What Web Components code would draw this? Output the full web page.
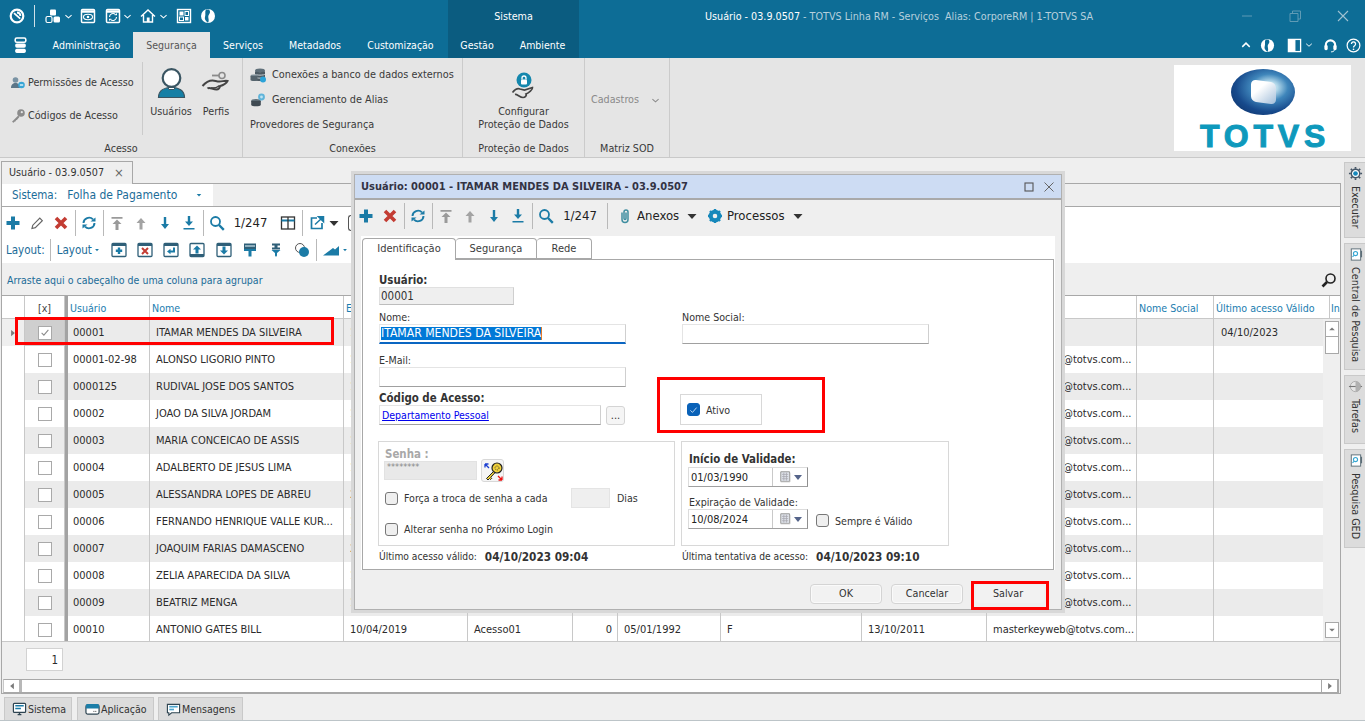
<!DOCTYPE html>
<html lang="pt-BR">
<head>
<meta charset="utf-8">
<title>Usuário - 03.9.0507</title>
<style>
html,body{margin:0;padding:0;width:1365px;height:721px;overflow:hidden;background:#efefef;}
body{font:10.7px/14px "DejaVu Sans","Liberation Sans",sans-serif;font-stretch:condensed;color:#2b2b2b;}
</style>
</head>
<body>
<script>
const T='#1b7ba6',D='#2f5f78';
const ICONS={
plus:`<path d="M6 1.5h4v4.500h4.500v4H10v4.500H6V10H1.500V6H6z" fill="${T}"/>`,
pencil:`<path d="M3 13.500l.8-3.300 7-7 2.500 2.500-7 7z" fill="#fff" stroke="#666" stroke-width="1.200"/>`,
cross:`<path d="M3 3l10 10M13 3L3 13" stroke="#c33c33" stroke-width="3.600" fill="none"/>`,
refresh:`<path d="M2.500 8a5.500 5.500 0 0 1 9.500-3.600M13.500 8A5.500 5.500 0 0 1 4 11.600" stroke="${T}" stroke-width="1.900" fill="none"/><path d="M9.500 6.500h5v-4zM6.500 9.500h-5v4z" fill="${T}"/>`,
top:`<path d="M2.500 2h11v1.700h-11zM8 4.500l4.500 4.500H9.500v6h-3V9H3.500z" fill="#9a9a9a"/>`,
up:`<path d="M8 3l4.500 5H9.500v6.500h-3V8H3.500z" fill="#a3a3a3"/>`,
down:`<path d="M8 14l4-5H9.200V2H6.800v7H4z" fill="${T}"/>`,
bottom:`<path d="M8 11l4-4.500H9.200V1H6.800v5.500H4zM2.500 13h11v1.600h-11z" fill="${T}"/>`,
search:`<circle cx="6.500" cy="6.500" r="4.500" fill="none" stroke="${T}" stroke-width="1.800"/><path d="M10 10l4.800 4.800" stroke="${T}" stroke-width="2.400"/>`,
searchd:`<circle cx="9.500" cy="6.500" r="4.500" fill="none" stroke="#222" stroke-width="1.600"/><path d="M6 10l-4.500 4.500" stroke="#222" stroke-width="2.600"/>`,
columns:`<rect x="1.500" y="2" width="13" height="12" fill="#fff" stroke="#333" stroke-width="1.300"/><path d="M1.500 5.500h13" stroke="${T}" stroke-width="2"/><path d="M8 2v12" stroke="#333" stroke-width="1.300"/>`,
export:`<path d="M8 3H2.500v10.500H13V8" fill="none" stroke="${T}" stroke-width="1.700"/><path d="M6 9.500L13 3M9.500 1.800h5v5z" stroke="${T}" stroke-width="1.500" fill="${T}"/>`,
caret:`<path d="M3.500 6h9L8 11z" fill="#333"/>`,
caretb:`<path d="M5 6.500h6L8 10z" fill="${T}"/>`,
chev:`<path d="M3.500 10l4.500-4 4.500 4" transform="rotate(180 8 8)" fill="none" stroke="currentColor" stroke-width="1.500"/>`,
chevup:`<path d="M3 10.500l5-5 5 5" fill="none" stroke="currentColor" stroke-width="1.900"/>`,
wadd:`<rect x="1" y="1.500" width="14" height="13" rx="1" fill="#fff" stroke="${D}" stroke-width="1.300"/><path d="M1 3h14" stroke="${D}" stroke-width="2"/><path d="M6.800 5.500h2.400v2h2v2.400h-2v2H6.800v-2h-2V7.500h2z" fill="${T}"/>`,
wdel:`<rect x="1" y="1.500" width="14" height="13" rx="1" fill="#fff" stroke="${D}" stroke-width="1.300"/><path d="M1 3h14" stroke="${D}" stroke-width="2"/><path d="M5 6l6 6M11 6l-6 6" stroke="#c33c33" stroke-width="2"/>`,
wret:`<rect x="1" y="1.500" width="14" height="13" rx="1" fill="#fff" stroke="${D}" stroke-width="1.300"/><path d="M1 3h14" stroke="${D}" stroke-width="2"/><path d="M11 5.500v4H7" fill="none" stroke="${T}" stroke-width="2"/><path d="M7.500 6.800v5.400L4 9.500z" fill="${T}"/>`,
wup:`<rect x="1" y="1.500" width="14" height="13" rx="1" fill="#fff" stroke="${D}" stroke-width="1.300"/><path d="M8 3.500l4 4H9.500v4h-3v-4H4z" fill="${T}"/><path d="M1 13h14" stroke="${D}" stroke-width="2"/>`,
wdown:`<rect x="1" y="1.500" width="14" height="13" rx="1" fill="#fff" stroke="${D}" stroke-width="1.300"/><path d="M8 12.500l4-4H9.500v-4h-3v4H4z" fill="${T}"/><path d="M1 3h14" stroke="${D}" stroke-width="2"/>`,
brush:`<path d="M2 1.500h12v5.500H2z" fill="${D}"/><path d="M3 4h10" stroke="#cfe3ec" stroke-width="1.200"/><path d="M2 7h12v2H9.500v5.500h-3V9H2z" fill="${T}"/>`,
pin:`<path d="M4 1.500h8v2H9.500v2H12v2H4v-2h2.500v-2H4z" fill="${D}"/><path d="M3.500 8h9L9 11v2.500L8 15l-1-1.500V11z" fill="${T}"/>`,
shapes:`<circle cx="6" cy="6" r="4.500" fill="#fff" stroke="#555" stroke-width="1"/><circle cx="10" cy="10" r="5" fill="${T}"/>`,
chart:`<path d="M0 13.500L10 6l2 1.500L16 4v9.500z" fill="${T}"/>`,
clip:`<path d="M5 5v7a3 3 0 0 0 6 0V4.500a2 2 0 0 0-4 0V11a1 1 0 0 0 2 0V5" fill="none" stroke="#3f8ea0" stroke-width="1.500" transform="translate(0 -.5)"/>`,
gear:`<circle cx="8" cy="8" r="4.300" fill="none" stroke="#1688bb" stroke-width="4"/><path d="M8 1v2.500M8 12.500V15M1 8h2.500M12.500 8H15M3 3l1.800 1.800M11.200 11.200L13 13M13 3l-1.800 1.800M4.800 11.200L3 13" stroke="#1688bb" stroke-width="2.400"/>`,
gearb:`<circle cx="8" cy="8" r="4.500" fill="#fff" stroke="#456" stroke-width="1.500"/><circle cx="8" cy="8" r="2.500" fill="#1688bb"/><path d="M8 1v2M8 13v2M1 8h2M13 8h2M3 3l1.500 1.500M11.500 11.500L13 13M13 3l-1.500 1.500M4.500 11.500L3 13" stroke="#456" stroke-width="1.800"/>`,
perm:`<circle cx="5.500" cy="5" r="2.800" fill="#7a93a4"/><path d="M1 13c0-3.500 2-5 4.500-5S10 9.500 10 13z" fill="#5c7688"/><circle cx="11.500" cy="10" r="3.300" fill="#37a5d6"/><path d="M9.800 10h3.400" stroke="#fff" stroke-width="1.200"/>`,
key:`<circle cx="11" cy="5" r="3.800" fill="#8b8b8b"/><circle cx="11.800" cy="4.200" r="1.100" fill="#e5e5e5"/><path d="M8.200 7.500L2 13.700l1.500 1 1.300-1.300 1-.1.100-1.100 1-.1 2.500-3.100z" fill="#8b8b8b"/>`,
user:`<path d="M3.500 30.500c0-7.500 6-10 13-10s13 2.500 13 10z" fill="#157fa5" stroke="#3a5562" stroke-width="1.200"/><circle cx="16.500" cy="11" r="8.800" fill="#fff" stroke="#3a5562" stroke-width="2.200"/><path d="M13 20.500h7l-1 2h-5z" fill="#fff" stroke="#3a5562"/>`,
hand:`<path d="M2.500 19c3-3.500 6-5.500 10-5.500 2.500 0 4 1 7 1s5.500-1.200 8-.5c-1.500 3.200-5.500 4.500-8 5.200 1 1.200-1 3.300-3 3.300-4 0-7-3-9-1" fill="none" stroke="#444" stroke-width="2"/><path d="M11 21c3 .3 6-.5 8-2" fill="none" stroke="#444" stroke-width="1.500"/><circle cx="22" cy="8.500" r="3" fill="none" stroke="#8b8b8b" stroke-width="1.600"/><path d="M19 8.500h-7" stroke="#8b8b8b" stroke-width="1.800"/>`,
db:`<ellipse cx="10" cy="3.500" rx="5" ry="2" fill="#60707a"/><path d="M5 4v9c0 1.300 10 1.300 10 0V4c0 1.500-10 1.500-10 0z" fill="#4c5a63"/><path d="M5 7c0 1.500 10 1.500 10 0M5 10c0 1.500 10 1.500 10 0" stroke="#c6ced3" fill="none"/><ellipse cx="4" cy="9" rx="3.500" ry="1.400" fill="#7a8a93"/><path d="M.5 9v4c0 1.400 7 1.400 7 0V9z" fill="#55646d"/><circle cx="13" cy="12.500" r="3" fill="#2ba3d8"/>`,
alias:`<ellipse cx="6" cy="9" rx="4.800" ry="1.900" fill="#5e6d76"/><path d="M1.200 9v4c0 1.800 9.600 1.800 9.600 0V9z" fill="#3f4a52"/><circle cx="11.500" cy="5" r="3.400" fill="#5fb4da"/><circle cx="11.500" cy="5" r="1.400" fill="#bfe3f2"/>`,
shield:`<circle cx="14" cy="9" r="7.500" fill="#1487ad"/><rect x="11" y="8.500" width="6" height="5" rx="1" fill="#fff"/><path d="M12 8.500V7a2 2 0 0 1 4 0v1.500" stroke="#fff" fill="none" stroke-width="1.300"/><path d="M2.500 21.500c2.500-3 5-4.500 7.500-3.500l4.500 1 8-2.500c.5 2-4 5.500-6.500 6.500 1 1.500-1 3.500-3 3.500-3 0-6-3.500-8-3" fill="none" stroke="#444" stroke-width="1.700"/>`,
cal:`<path d="M2 2h10v11H2z" fill="#dfe3ea" stroke="#8d8d8d"/><path d="M3.500 5h7M3.500 7.500h7M3.500 10h7M5.500 3v9M8.500 3v9" stroke="#a8a8b0" stroke-width=".9"/><path d="M2 13.500h10.500V3" stroke="#bbb" fill="none"/>`,
keyg:`<circle cx="14" cy="7" r="5" fill="#f0d13c" stroke="#222" stroke-width="1.200"/><circle cx="14" cy="7" r="2" fill="none" stroke="#222" stroke-width=".8" stroke-dasharray="1 1"/><path d="M10.500 10.500L3.500 17.500l1.500 1.500 1.500-1.500 1 1 1.200-1.200-1-1 4-4.300z" fill="#f0d13c" stroke="#222"/><path d="M2 2l4 4M2 2v3.500M2 2h3.500" stroke="#1b3ed1" stroke-width="1.300" fill="none" transform="translate(0 1)"/><path d="M19 19l-4-4M19 19v-3.500M19 19h-3.500" stroke="#e11" stroke-width="1.300" fill="none"/>`,
side1:`<rect x="3.500" y="2" width="10" height="12" fill="#fff" stroke="#5b6d77"/><circle cx="8" cy="7" r="2.200" fill="none" stroke="#35a6d2" stroke-width="1.200"/><path d="M6.300 9l-1.500 1.500" stroke="#35a6d2" stroke-width="1.200"/><path d="M13.500 4h1.500v7h-1.500z" fill="#5b6d77"/>`,
ball:`<circle cx="8" cy="8" r="5.500" fill="#e6e6e6" stroke="#aaa"/><path d="M1 8h14" stroke="#777" stroke-width="1.200"/><path d="M8 2.500a5.500 5.500 0 0 1 0 11" fill="#b0b0b0"/>`,
monitor:`<rect x="1.500" y="1.500" width="13" height="9.500" rx="1" fill="#fff" stroke="#2f4552" stroke-width="1.300"/><path d="M3.500 4h9M3.500 7h6" stroke="${T}" stroke-width="1.500"/><path d="M6 13.500h4M8 11v2.500" stroke="#2f4552" stroke-width="1.500"/>`,
app:`<rect x="1" y="3" width="14" height="10" rx="2" fill="#fff" stroke="#2f4552" stroke-width="1.300"/><path d="M1 3.500C1 2.700 2 2 3 2h10c1 0 2 .7 2 1.500V7H1z" fill="#1c7ea8"/><path d="M9 10h1M11 10h1" stroke="#333"/>`,
msg:`<path d="M1.500 2.500h13v9H6l-3 2.500v-2.500H1.500z" fill="#fff" stroke="#2f4552" stroke-width="1.200"/><path d="M3.500 5h9" stroke="#4da6cf" stroke-width="1.800"/><path d="M3.500 8h5" stroke="#4da6cf" stroke-width="1.800"/>`,
qring:`<circle cx="8" cy="8" r="6.300" fill="none" stroke="#fff" stroke-width="2.200"/><path d="M5 5.200l6.200 5.500M8 4.500a3.600 3.600 0 0 1 3.400 3.500" fill="none" stroke="#fff" stroke-width="1.800"/>`,
qcubes:`<rect x="5" y="1.500" width="6" height="6" rx="1" fill="#fff"/><rect x="1" y="8.500" width="6" height="6" rx="1.500" fill="none" stroke="#fff" stroke-width="1.200"/><rect x="8.500" y="8.500" width="6.500" height="6" rx="1.500" fill="#fff"/>`,
qeye:`<rect x="1.500" y="1.500" width="13" height="13" rx="1" fill="none" stroke="#fff" stroke-width="1.500"/><path d="M1.500 3.500h13" stroke="#fff" stroke-width="2.500"/><ellipse cx="8" cy="9" rx="4.500" ry="2.700" fill="none" stroke="#fff" stroke-width="1.100"/><circle cx="8" cy="9" r="1.300" fill="#fff"/>`,
qwinr:`<rect x="1.500" y="1.500" width="13" height="13" rx="1" fill="none" stroke="#fff" stroke-width="1.500"/><path d="M1.500 3.500h13" stroke="#fff" stroke-width="2.500"/><path d="M4.500 9a3.500 3.500 0 0 1 6-2.400M11.500 9a3.500 3.500 0 0 1-6 2.400" fill="none" stroke="#fff" stroke-width="1.100"/><path d="M9.500 7.200h2.500V5zM6.500 10.800H4V13z" fill="#fff"/>`,
qhome:`<path d="M1 8.500L8 2l7 6.500M3.500 7v7h9V7" fill="none" stroke="#fff" stroke-width="1.400"/><rect x="6.800" y="9.500" width="2.800" height="4.500" fill="#fff"/>`,
qgrid:`<rect x="1.500" y="1.500" width="13" height="13" fill="none" stroke="#fff" stroke-width="1.400"/><rect x="3.500" y="3.500" width="4" height="4" fill="#fff"/><rect x="9" y="3.500" width="3.500" height="4" fill="none" stroke="#fff"/><rect x="3.500" y="9" width="4" height="3.500" fill="none" stroke="#fff"/><rect x="9" y="9" width="3.500" height="3.500" fill="#fff"/>`,
globe:`<circle cx="8" cy="8" r="7" fill="#fff"/><path d="M6 1.500C4.500 4 6 6 5 9s2.500 5 3 5.800C10 12 7 9 9 6.500s.5-4 0-5z" fill="#0d6d96"/>`,
qstack:`<rect x="3" y="1" width="10" height="4" rx="1.500" fill="none" stroke="#fff" stroke-width="1.500"/><rect x="3" y="6" width="10" height="4" rx="1.500" fill="#fff"/><rect x="3" y="11" width="10" height="4" rx="1.500" fill="#fff"/>`,
panel:`<rect x="1.500" y="1.500" width="13" height="13" fill="none" stroke="#fff" stroke-width="1.400"/><rect x="2" y="2" width="6.500" height="12" fill="#fff"/><path d="M8.500 2v12" stroke="#fff"/>`,
headset:`<path d="M3 10V7.500a5 5 0 0 1 10 0V10" fill="none" stroke="#fff" stroke-width="2.200"/><rect x="1.500" y="7.500" width="3.500" height="5.500" rx="1.500" fill="#fff"/><rect x="11" y="7.500" width="3.500" height="5.500" rx="1.500" fill="#fff"/><path d="M12 13c0 1.500-2 1.800-3.500 1.800" fill="none" stroke="#fff"/>`,
help:`<circle cx="8" cy="8" r="6.800" fill="none" stroke="#fff" stroke-width="1.300"/><path d="M5.800 6.300a2.200 2.200 0 1 1 3.400 1.900C8.300 8.800 8 9.200 8 10" fill="none" stroke="#fff" stroke-width="1.400"/><circle cx="8" cy="12" r=".9" fill="#fff"/>`,
min:`<path d="M3 8h10" stroke="#5f9bb5" stroke-width="1"/>`,
restore:`<path d="M3 5.500h8v8H3zM5.500 5.500V3h8v8H11" fill="none" stroke="#5f9bb5" stroke-width="1"/>`,
close:`<path d="M3 3l10 10M13 3L3 13" fill="none" stroke="#a0c2d2" stroke-width="1.100"/>`,
dmax:`<rect x="4" y="4" width="8" height="8" fill="none" stroke="#555" stroke-width="1.100"/>`,
dclose:`<path d="M3.500 3.500l9 9M12.500 3.500l-9 9" fill="none" stroke="#666" stroke-width="1"/>`,
tri_r:`<path d="M5 3l6 5-6 5z" fill="#7a7a7a"/>`,
tri_l:`<path d="M11 3L5 8l6 5z" fill="#7a7a7a"/>`,
tri_u:`<path d="M3.500 10L8 5.500 12.500 10z" fill="#7a7a7a"/>`,
tri_d:`<path d="M3.500 6L8 10.500 12.500 6z" fill="#7a7a7a"/>`,
check:`<path d="M3.500 8.500l3 3 6-7" fill="none" stroke="#8a8a8a" stroke-width="1.400"/>`,
checkw:`<path d="M3.500 8.500l3 3 6-7" fill="none" stroke="#cfe4fa" stroke-width="1.300"/>`
};
function def(name,css,html,init){
  customElements.define(name,class extends HTMLElement{
    constructor(){super();const r=this.attachShadow({mode:'open'});r.innerHTML=`<style>${css}</style>${html}`;}
    connectedCallback(){if(init&&!this._i){this._i=1;init.call(this,this.shadowRoot);}}
  });
}
function svg(n,s,vb){return `<svg xmlns="http://www.w3.org/2000/svg" width="${s}" height="${s}" viewBox="0 0 ${vb||16} ${vb||16}">${ICONS[n]||''}</svg>`;}
def('rm-icon',`:host{display:inline-flex;align-items:center;justify-content:center;flex:none;line-height:0}svg{display:block}`,``,function(r){
  const s=this.getAttribute('size')||16;r.innerHTML+=svg(this.getAttribute('name'),s,this.getAttribute('vb'));
});
def('rm-tb',`:host{display:inline-flex;width:24px;height:24px;align-items:center;justify-content:center;flex:none}`,``,function(r){
  r.innerHTML+=svg(this.getAttribute('name'),this.getAttribute('size')||16);
});
def('rm-sep',`:host{display:block;width:1px;height:26px;background:#b9b9b9;margin:0 1px 0 2px;flex:none}`,``);
def('rm-app',`:host{display:flex;flex-direction:column;width:1365px;height:721px;position:relative;overflow:hidden;background:#efefef}
.work{display:flex;height:539px;padding-left:1px;gap:3px;box-sizing:border-box}`,
`<slot name="header"></slot><slot name="ribbon"></slot><div class="work"><slot name="main"></slot><slot name="side"></slot></div><slot name="bottom"></slot><slot></slot>`);
def('rm-header',`:host{display:block;height:58px;color:#fff;background:linear-gradient(90deg,#0d6d96 448px,#0b5c80 448px,#0b5c80 579px,#0d6d96 579px)}
.r1{display:flex;height:32px;align-items:center}
.qat{display:flex;align-items:center;width:448px;height:32px;flex:none}
.sep{width:1px;height:22px;background:#cfe0e8;margin:0 10px 0 9px}
.sys{width:131px;text-align:center;flex:none;padding-top:1px}
.ttl{margin-left:126px;white-space:pre;color:#fff;padding-top:1px}.ttl span{color:#b6d0dd}
.win{margin-left:auto;display:flex;gap:32px;padding-right:14px}
.r2{display:flex;height:26px;align-items:center}
.stack{width:40px;display:flex;justify-content:center;flex:none}
.tab{flex:none;height:26px;line-height:26px;text-align:center;font-size:10.5px}
.tab.on{background:#e5e5e5;color:#555}
.right{margin-left:auto;display:flex;align-items:center;padding-right:4px}`,
`<div class="r1"><div class="qat">
<rm-icon name="qring" size="16" style="margin-left:9px"></rm-icon><span class="sep"></span>
<rm-icon name="qcubes" size="16"></rm-icon><rm-icon name="chev" size="11" style="margin:0 5px 0 2px"></rm-icon>
<rm-icon name="qeye" size="16" style="margin-left:1px"></rm-icon>
<rm-icon name="qwinr" size="16" style="margin-left:9px"></rm-icon><rm-icon name="chev" size="11" style="margin:0 6px 0 1px"></rm-icon>
<rm-icon name="qhome" size="16" style="margin-left:1px"></rm-icon><rm-icon name="chev" size="11" style="margin:0 6px 0 2px"></rm-icon>
<rm-icon name="qgrid" size="16" style="margin-left:1px"></rm-icon>
<rm-icon name="globe" size="16" style="margin-left:8px"></rm-icon>
</div><div class="sys">Sistema</div>
<div class="ttl">Usuário - 03.9.0507<span> - TOTVS Linha RM - Serviços  Alias: CorporeRM | 1-TOTVS SA</span></div>
<div class="win"><rm-icon name="min" size="16"></rm-icon><rm-icon name="restore" size="16"></rm-icon><rm-icon name="close" size="16"></rm-icon></div></div>
<div class="r2"><div class="stack"><rm-icon name="qstack" size="17"></rm-icon></div>
<div class="tab" style="width:93px">Administração</div><div class="tab on" style="width:77px">Segurança</div><div class="tab" style="width:66px">Serviços</div><div class="tab" style="width:78px">Metadados</div><div class="tab" style="width:93px">Customização</div><div class="tab" style="width:60px">Gestão</div><div class="tab" style="width:71px">Ambiente</div>
<div class="right"><rm-icon name="chevup" size="12" style="margin-right:8px"></rm-icon><rm-icon name="globe" size="15" style="margin-right:12px"></rm-icon><rm-icon name="panel" size="15"></rm-icon><rm-icon name="chev" size="10" style="margin:0 9px 0 2px"></rm-icon><rm-icon name="headset" size="15" style="margin-right:8px"></rm-icon><rm-icon name="help" size="15"></rm-icon></div></div>`);
def('rm-ribbon',`:host{display:flex;height:100px;box-sizing:border-box;background:#e5e5e5;border-bottom:1px solid #c9c9c9;position:relative}
.logo{margin:7px 14px 0 auto;width:177px;height:86px;background:#fff;display:flex;flex-direction:column;align-items:center;box-sizing:border-box;padding-top:4px}
.globe{width:64px;height:46px;border-radius:50%;background:radial-gradient(ellipse at 60% 40%,#b8dcec 0 14%,#3f86bb 34%,#174a8c 62%,#0b2a5c 100%);position:relative;flex:none}
.globe i{position:absolute;left:20px;top:12px;width:25px;height:22px;background:linear-gradient(135deg,#ffffff 35%,#9fbcd9);border-radius:5px;transform:skewY(8deg)}
.word{font:bold 32px/30px "Liberation Sans",sans-serif;height:30px;color:#0e99bc;letter-spacing:4.800px;margin-top:6px;padding-left:5px;-webkit-text-stroke:1px #0e99bc}`,
`<slot></slot><div class="logo"><div class="globe"><i></i></div><div class="word">TOTVS</div></div>`);
def('rm-group',`:host{display:flex;flex-direction:column;height:99px;box-sizing:border-box;border-right:1px solid #cbcbcb;flex:none}
.c{height:80px;display:flex}.l{height:19px;text-align:center;line-height:17px;color:#3a3a3a;padding-top:2px;box-sizing:border-box}`,
`<div class="c"><slot></slot></div><div class="l"></div>`,function(r){r.querySelector('.l').textContent=this.getAttribute('label');});
def('rm-rb',`:host{display:flex;align-items:center;height:25px;color:#3a3a3a;white-space:nowrap}
.i{width:var(--iw,22px);display:flex;justify-content:flex-start;flex:none}`,`<span class="i"></span><slot></slot>`,function(r){
  const n=this.getAttribute('icon');const i=r.querySelector('.i');if(n)i.innerHTML=svg(n,16);else i.remove();
});
def('rm-big',`:host{display:flex;flex-direction:column;align-items:center;flex:none;color:#3a3a3a;text-align:center;line-height:13px}
.i{display:flex;height:32px;align-items:flex-end;margin-bottom:6px}`,`<span class="i"></span><slot></slot>`,function(r){
  r.querySelector('.i').innerHTML=svg(this.getAttribute('icon'),this.getAttribute('size')||32,this.getAttribute('vb')||32);
});
def('rm-doc',`:host{display:flex;flex-direction:column;width:1340px;flex:none;padding-top:2px;box-sizing:border-box}
.tab{height:23px;width:132px;box-sizing:border-box;border:1px solid #a8a8a8;border-bottom:none;display:flex;align-items:center;padding-left:7px;color:#333;background:#efefef;position:relative;top:1px}
.tab span{margin-left:10px;color:#666;font-size:13px}
.p{height:511px;box-sizing:border-box;border:1px solid #a8a8a8;background:#efefef;display:flex;flex-direction:column}
.f{height:22px;display:flex}
.fb{width:211px;background:#fff;display:flex;align-items:center;padding:0 0 1px 10px;box-sizing:border-box;color:#1b6c98;font-size:11.5px}
.fb b{font-weight:normal;margin-left:10px;width:126px;font-size:12px;white-space:nowrap}
.ln{height:1px;background:#a8a8a8;flex:none}
.tools{height:56px;background:#fff;flex:none;padding-top:2px;box-sizing:border-box}
.tr{display:flex;align-items:center;height:28px;margin:0 0 0 -1px}
.tr .n{font-size:13px;width:39px;text-align:center;color:#222;margin:0 1px 0 2px}
.lay{color:#1b6c98;font-size:11.5px}
.tr2{height:26px;margin-left:4px}
.tr2 rm-tb{width:26.200px}
.band{height:32px;flex:none;display:flex;align-items:center;justify-content:space-between;padding:1px 3px 0 5px;color:#1b6c98;box-sizing:border-box;font-size:10.5px}
.foot{height:37px;flex:none;padding:6px 0 0 24px;box-sizing:border-box}
.pg{width:37px;height:23px;background:#fff;border:1px solid #d2d2d2;box-sizing:border-box;text-align:right;padding-right:4px;line-height:22px;font-size:11.5px}
.hs{height:14px;margin:0 1px 0 1px;background:#fff;border:1px solid #a8a8a8;border-left-color:#c8c8c8;display:flex;justify-content:space-between;flex:none;box-sizing:border-box}
.hs .b{width:15px;display:flex;align-items:center;justify-content:center;background:#fff}
.hs .b.l{border-right:3px solid #b8b8b8}
.hs .b.r{border:1px solid #a8a8a8;margin:-1px 0 -1px}`,
`<div class="tab">Usuário - 03.9.0507<span>×</span></div>
<div class="p">
<div class="f"><div class="fb">Sistema:<b>Folha de Pagamento</b><rm-icon name="caretb" size="12"></rm-icon></div></div>
<div class="ln"></div>
<div class="tools">
<div class="tr"><rm-tb name="plus"></rm-tb><rm-tb name="pencil"></rm-tb><rm-tb name="cross"></rm-tb><rm-sep></rm-sep><rm-tb name="refresh"></rm-tb><rm-sep></rm-sep><rm-tb name="top"></rm-tb><rm-tb name="up"></rm-tb><rm-tb name="down"></rm-tb><rm-tb name="bottom"></rm-tb><rm-sep></rm-sep><rm-tb name="search"></rm-tb><span class="n">1/247</span><rm-tb name="columns" style="margin-left:5px"></rm-tb><rm-sep></rm-sep><rm-tb name="export" style="margin-left:1px"></rm-tb><rm-icon name="caret" size="16" style="margin-left:-3px"></rm-icon><span style="width:8px;height:16px;border:1px solid #555;border-right:none;border-radius:3px 0 0 3px;margin-left:6px;box-sizing:border-box"></span></div>
<div class="tr tr2"><span class="lay">Layout:</span><rm-sep style="margin:0 6px 0 5px;height:22px"></rm-sep><span class="lay">Layout</span><rm-icon name="caretb" size="10" style="margin:0 4px 0 0"></rm-icon><rm-tb name="wadd"></rm-tb><rm-tb name="wdel"></rm-tb><rm-tb name="wret"></rm-tb><rm-tb name="wup"></rm-tb><rm-tb name="wdown"></rm-tb><rm-tb name="brush"></rm-tb><rm-tb name="pin"></rm-tb><rm-tb name="shapes"></rm-tb><rm-sep style="height:22px;margin:0 0 0 1px"></rm-sep><rm-tb name="chart" style="margin-left:1px"></rm-tb><rm-icon name="caretb" size="10" style="margin-left:-5px"></rm-icon></div>
</div>
<div class="band"><span>Arraste aqui o cabeçalho de uma coluna para agrupar</span><rm-icon name="searchd" size="16"></rm-icon></div>
<div class="ln"></div>
<slot></slot>
<div class="foot"><div class="pg">1</div></div>
<div class="hs"><div class="b l"><rm-icon name="tri_l" size="10"></rm-icon></div><div class="b r"><rm-icon name="tri_r" size="10"></rm-icon></div></div>
</div>`);
const COLS='23px 40px 3px 82px 194px 124px 105px 45px 103px 141px 125px 150px 77px 116px 10px';
def('rm-grid',`:host{display:block;flex:none;height:345px;background:#fff;border-bottom:1px solid #c8c8c8;box-sizing:content-box;color:#2b2b2b;font-size:11px}
.h,.row{display:grid;grid-template-columns:${COLS}}
.h{height:22px;border-bottom:1px solid #c8c8c8;color:#1b7db0;line-height:24px;background:#fff;font-size:10.6px}
.h>div,.row>div{border-right:1px solid #c8c8c8;box-sizing:border-box;overflow:hidden;white-space:nowrap;padding-left:2px;min-width:0}
.h>.g,.row>.g{padding:0}
.h>.x{text-align:center;color:#444;padding:0}
.h>.bar,.row>.bar{background:#a3a3a3;border:none;padding:0}
.h>.lst{padding-left:1px;border-right:none}
.bd{display:flex;height:322px;overflow:hidden;background:#fff}
.rows{width:1321px;height:322px;overflow:hidden;flex:none}
.row{height:27px;line-height:28px;overflow:hidden}
.row:nth-child(odd){background:#ebebeb}
.row>.g{background:#fff}
.row.first>.g{background:#efefef;display:flex;align-items:center;justify-content:center}
.row>.u{padding-left:5px}.row>.n{padding-left:6px}.row>.c{padding-left:6px}
.row>.e{padding-left:6px}
.row>.em{padding-left:76px}
.row>.r{text-align:right;padding-right:5px}
.row>.cb{display:flex;align-items:center;justify-content:center;padding:0}
.row.first>.cb{background:#cfcfcf}
.box{width:14px;height:14px;border:1px solid #a9a9a9;background:#fff;box-sizing:border-box;display:flex;align-items:center;justify-content:center}
.vs{flex:1;background:#efefef;display:flex;flex-direction:column;align-items:center;padding:2px 1px;box-sizing:border-box}
.vb{width:14px;height:16px;border:1px solid #a8a8a8;background:#fff;box-sizing:border-box;display:flex;align-items:center;justify-content:center;flex:none}
.vt{width:14px;height:17px;border:1px solid #a8a8a8;border-top:none;background:#fff;box-sizing:border-box;flex:none}`,
`<div class="h"></div><div class="bd"><div class="rows"></div><div class="vs"><div class="vb">${svg('tri_u',10)}</div><div class="vt"></div><div style="flex:1"></div><div class="vb" style="margin-bottom:1px">${svg('tri_d',10)}</div></div></div>`,function(r){
  const heads=['','[x]','','Usuário','Nome','E','','','','','','','Nome Social','Último acesso Válido','In'];
  r.querySelector('.h').innerHTML=heads.map((t,i)=>`<div class="${i==0?'g':i==1?'x':i==2?'bar':i==14?'lst':''}">${t}</div>`).join('');
  const data=[['00001','ITAMAR MENDES DA SILVEIRA','1'],['00001-02-98','ALONSO LIGORIO PINTO','1'],['0000125','RUDIVAL JOSE DOS SANTOS','1'],['00002','JOAO DA SILVA JORDAM','1'],['00003','MARIA CONCEICAO DE ASSIS','1'],['00004','ADALBERTO DE JESUS LIMA','1'],['00005','ALESSANDRA LOPES DE ABREU','2'],['00006','FERNANDO HENRIQUE VALLE KUR...','1'],['00007','JOAQUIM FARIAS DAMASCENO','2'],['00008','ZELIA APARECIDA DA SILVA','1'],['00009','BEATRIZ MENGA','1'],['00010','ANTONIO GATES BILL','10/04/2019']];
  r.querySelector('.rows').innerHTML=data.map((d,i)=>{
    const last=i==11;
    return `<div class="row ${i==0?'first':''}"><div class="g">${i==0?svg('tri_r',10):''}</div><div class="cb"><span class="box">${i==0?svg('check',13):''}</span></div><div class="bar"></div><div class="u">${d[0]}</div><div class="n">${d[1]}</div><div class="c">${d[2]}</div><div class="c">${last?'Acesso01':''}</div><div class="r">${last?'0':''}</div><div class="c">${last?'05/01/1992':''}</div><div class="c">${last?'F':''}</div><div class="c">${last?'13/10/2011':''}</div><div class="e ${last?'':'em'}">${i==0?'':last?'masterkeyweb@totvs.com...':'@totvs.com...'}</div><div></div><div class="c" style="padding-left:7px">${i==0?'04/10/2023':''}</div></div>`;
  }).join('');
});
def('rm-side',`:host{display:flex;flex-direction:column;gap:5px;width:21px;flex:none;padding-top:4px}`,`<slot></slot>`);
def('rm-stab',`:host{display:flex;flex-direction:column;align-items:center;width:21px;box-sizing:border-box;background:#dcdcdc;border:1px solid #c9c9c9;border-right:none;padding-top:3px;flex:none}
.t{writing-mode:vertical-rl;white-space:nowrap;color:#333;line-height:20px;margin-top:1px}`,
`<span class="i"></span><span class="t"><slot></slot></span>`,function(r){
  r.querySelector('.i').innerHTML=svg(this.getAttribute('icon'),15);
  this.style.height=this.getAttribute('h')+'px';
});
def('rm-bottom',`:host{display:flex;height:24px;box-sizing:border-box;margin-top:3px;padding-left:4px;gap:4px;border-bottom:1px solid #bcc4c8}`,`<slot></slot>`);
def('rm-btab',`:host{display:flex;align-items:center;height:23px;box-sizing:border-box;background:#dcdcdc;border:1px solid #c9c9c9;border-bottom:none;gap:1px;padding-left:7px;flex:none;font-size:10.5px;color:#333}`,
`<span class="i" style="line-height:0"></span><slot></slot>`,function(r){r.querySelector('.i').innerHTML=svg(this.getAttribute('icon'),15);this.style.width=this.getAttribute('w')+'px';});
def('rm-dialog',`:host{position:absolute;left:354px;top:174px;width:708px;height:436px;box-sizing:border-box;background:#efefef;border:1px solid #b0b0b0;box-shadow:0 0 0 3px #d8d8d8;display:flex;flex-direction:column}
.tb{background:#cddcf3;border-bottom:2px solid #a9a9a9;display:flex;align-items:center;padding:1px 0 0 6px;box-sizing:content-box;height:22px;font-weight:bold;color:#334;flex:none;font-size:11px}
.tb span{flex:1}.tb rm-icon{margin-right:4px}
.tools{height:36px;display:flex;align-items:center;padding-bottom:4px;box-sizing:border-box;flex:none;font-size:13px;color:#222;margin-left:-1px}
.tools .n{width:40px;text-align:center;margin:0 5px 0 2px}
.body{margin:0 6px 0 6px;height:334px;background:#fff;padding:2px 0 0 1px;box-sizing:border-box;flex:none}
.foot{display:flex;padding:14px 0 0 455px;gap:9px;align-items:flex-start}`,
`<div class="tb"><span>Usuário: 00001 - ITAMAR MENDES DA SILVEIRA - 03.9.0507</span><rm-icon name="dmax" size="16"></rm-icon><rm-icon name="dclose" size="16"></rm-icon></div>
<div class="tools"><rm-tb name="plus"></rm-tb><rm-tb name="cross"></rm-tb><rm-sep></rm-sep><rm-tb name="refresh"></rm-tb><rm-sep></rm-sep><rm-tb name="top"></rm-tb><rm-tb name="up"></rm-tb><rm-tb name="down"></rm-tb><rm-tb name="bottom"></rm-tb><rm-sep></rm-sep><rm-tb name="search"></rm-tb><span class="n">1/247</span><rm-sep></rm-sep><rm-tb name="clip" style="margin-left:4px"></rm-tb><span style="width:46px">Anexos</span><rm-icon name="caret" size="16" style="margin:0 7px 0 1px"></rm-icon><rm-icon name="gear" size="16" style="margin-right:4px"></rm-icon><span style="width:63px">Processos</span><rm-icon name="caret" size="16"></rm-icon></div>
<div class="body"><slot></slot></div>
<div class="foot"><slot name="actions"></slot></div>`);
def('rm-tabs',`:host{display:block}
.s{display:flex;height:21px;align-items:flex-end;position:relative;z-index:1}
.t{height:21px;box-sizing:border-box;border:1px solid #a8a8a8;border-left:none;border-radius:4px 4px 0 0;text-align:center;line-height:20px;font-size:11px;color:#3c3c3c;background:#fff}
.t.on{border-left:1px solid #a8a8a8;border-bottom:none;height:22px;margin-bottom:-1px}
.p{height:311px;box-sizing:border-box;border:1px solid #a8a8a8;width:692px;padding:13px 0 0 16px}`,
`<div class="s"><div class="t on" style="width:94px">Identificação</div><div class="t" style="width:81px">Segurança</div><div class="t" style="width:55px">Rede</div></div><div class="p"><slot></slot></div>`);
def('rm-field',`:host{display:block;color:#333;font-size:10.6px}
.l{height:14px;line-height:14px;white-space:nowrap}
:host([bold]) .l{font-weight:bold;font-size:11.4px;color:#333}
.b{box-sizing:border-box;background:#fff;border:1px solid #e4e4e4;border-bottom:1px solid #a0a0a0;border-right-color:#cfcfcf;display:flex;align-items:center;padding-left:1px;white-space:nowrap;overflow:hidden;font-size:11.5px}
:host([ro]) .b{background:#efefef;border-color:#e0e0e0;border-bottom-color:#bdbdbd;border-right-color:#cfcfcf}
:host([focus]) .b{border-bottom:2px solid #0a66c2;border-left-color:#e9e9e9}`,
`<div class="l"></div><div class="b"><slot></slot></div>`,function(r){
  r.querySelector('.l').textContent=this.getAttribute('label');
  const b=r.querySelector('.b');b.style.width=this.getAttribute('w')+'px';b.style.height=this.getAttribute('h')+'px';
});
def('rm-check',`:host{display:flex;align-items:center;gap:6px;color:#333;font-size:10.6px;white-space:nowrap}
.c{width:13px;height:13px;border:1px solid #777;border-radius:3px;background:#efefef;box-sizing:border-box;display:flex;align-items:center;justify-content:center;flex:none}
:host([checked]) .c{background:#0a62b8;border-color:#0a62b8}`,
`<span class="c"></span><slot></slot>`,function(r){if(this.hasAttribute('checked'))r.querySelector('.c').innerHTML=svg('checkw',12);});
def('rm-date',`:host{display:flex;width:120px;height:20px;box-sizing:border-box;border:1px solid #dcdcdc;border-bottom-color:#a0a0a0;border-right-color:#8f8f8f;background:#fff;font-size:11px;color:#222}
.v{width:84px;border-right:1px solid #c9c9c9;padding-left:2px;line-height:19px;box-sizing:border-box}
.b{flex:1;display:flex;align-items:center;justify-content:center;line-height:0;gap:1px}.tr{width:0;height:0;border:4px solid transparent;border-top:5px solid #55648a;border-bottom:none}`,
`<div class="v"><slot></slot></div><div class="b">${svg('cal',14)}<span class="tr"></span></div>`);
def('rm-btn',`:host{display:flex;width:72px;height:20px;box-sizing:border-box;border:1px solid #d4d4d4;border-radius:4px;background:#f2f2f2;align-items:center;justify-content:center;color:#333;font-size:10.7px;flex:none;box-shadow:inset 0 0 0 1px #fafafa}`,`<slot></slot>`);
def('rm-mark',`:host{position:absolute;box-sizing:border-box;border:3px solid #f00;display:block;pointer-events:none;z-index:5}`,``);
def('rm-form',`:host{display:block;color:#333}
.top{display:grid;grid-template-columns:303px 1fr}
.groups{display:flex;margin:16px 0 0 -1px;gap:6px}
.g{box-sizing:border-box;border:1px solid #d8d8d8;height:105px;flex:none}
.g1{width:297px;padding:5px 0 0 6px}.g2{width:268px;padding:10px 0 0 7px}
.ttl{height:14px;line-height:15px;font-weight:bold;font-size:11.4px}
.gr{color:#a8a8a8}
.row{display:flex;align-items:center}
.ip{width:93px;height:19px;background:#e9e9e9;border:1px solid #e2e2e2;box-sizing:border-box;color:#888;font-size:9px;line-height:11px;padding-left:2px;margin-left:-1px}
.key{width:23px;height:23px;border:1px solid #d8d8d8;border-radius:3px;background:#f5f5f5;margin-left:4px;box-sizing:border-box;display:flex;align-items:center;justify-content:center}
.days{width:39px;height:20px;background:#efefef;border:1px solid #e4e4e4;box-sizing:border-box;margin:0 7px 0 0}
.sm{font-size:10.6px;height:14px;line-height:15px}
.bot{display:flex;margin-top:4px;height:14px;line-height:14px;font-size:10.2px;align-items:center}
.bot b{font-size:11.7px;margin-left:8px}
.bot div{display:flex;align-items:center;white-space:nowrap}`,
`<div class="top"><div><slot name="left"></slot></div><div><slot name="right"></slot></div></div>
<div class="groups">
<div class="g g1"><div class="ttl gr" style="margin-bottom:-2px">Senha :</div>
<div class="row"><div class="ip">********</div><div class="key">${svg('keyg',20,20)}</div></div>
<div class="row" style="margin-top:6px"><rm-check style="width:186px">Força a troca de senha a cada</rm-check><span class="days"></span><span class="sm">Dias</span></div>
<div class="row" style="margin-top:14px"><rm-check>Alterar senha no Próximo Login</rm-check></div></div>
<div class="g g2"><div class="ttl">Início de Validade:</div><rm-date style="margin:1px 0 0 -1px">01/03/1990</rm-date>
<div class="sm" style="margin-top:8px">Expiração de Validade:</div>
<div class="row" style="margin-left:-1px"><rm-date>10/08/2024</rm-date><rm-check style="margin:3px 0 0 8px">Sempre é Válido</rm-check></div></div>
</div>
<div class="bot"><div style="width:303px">Último acesso válido:<b>04/10/2023 09:04</b></div><div>Última tentativa de acesso:<b>04/10/2023 09:10</b></div></div>`);
</script>
<rm-app>
<rm-header slot="header"></rm-header>
<rm-ribbon slot="ribbon">
  <rm-group label="Acesso" style="width:243px"><div style="display:flex;width:100%">
    <div style="width:143px;height:73px;border-right:1px solid #cbcbcb;margin-top:4px;padding:8px 0 0 10px;box-sizing:border-box;flex:none;--iw:18px">
      <rm-rb icon="perm" style="height:26px;margin-bottom:7px">Permissões de Acesso</rm-rb>
      <rm-rb icon="key" style="height:26px">Códigos de Acesso</rm-rb>
    </div>
    <div style="display:flex;padding-top:9px">
      <rm-big icon="user" style="width:50px;margin-left:3px">Usuários</rm-big>
      <rm-big icon="hand" style="width:40px">Perfis</rm-big>
    </div></div>
  </rm-group>
  <rm-group label="Conexões" style="width:220px"><div style="padding:4px 0 0 7px;font-size:10.8px">
    <rm-rb icon="db">Conexões a banco de dados externos</rm-rb>
    <rm-rb icon="alias">Gerenciamento de Alias</rm-rb>
    <rm-rb>Provedores de Segurança</rm-rb></div>
  </rm-group>
  <rm-group label="Proteção de Dados" style="width:122px"><rm-big icon="shield" size="28" vb="28" style="width:121px;padding-top:9px">Configurar<br>Proteção de Dados</rm-big></rm-group>
  <rm-group label="Matriz SOD" style="width:85px"><div style="display:flex;align-items:center;height:80px;padding-left:6px;color:#8a8a8a;margin-top:2px">Cadastros<rm-icon name="chev" size="11" style="margin-left:11px"></rm-icon></div></rm-group>
</rm-ribbon>
<rm-doc slot="main"><rm-grid></rm-grid></rm-doc>
<rm-side slot="side">
  <rm-stab icon="gearb" h="76">Executar</rm-stab>
  <rm-stab icon="side1" h="127">Central de Pesquisa</rm-stab>
  <rm-stab icon="ball" h="69">Tarefas</rm-stab>
  <rm-stab icon="side1" h="99">Pesquisa GED</rm-stab>
</rm-side>
<rm-bottom slot="bottom">
  <rm-btab icon="monitor" w="68">Sistema</rm-btab>
  <rm-btab icon="app" w="77" style="margin-left:1px">Aplicação</rm-btab>
  <rm-btab icon="msg" w="85">Mensagens</rm-btab>
</rm-bottom>
<rm-dialog>
  <rm-tabs><rm-form>
    <div slot="left">
      <rm-field bold label="Usuário:" ro w="135" h="18" style="margin-bottom:5px">00001</rm-field>
      <rm-field focus label="Nome:" w="247" h="20" style="margin-bottom:9px"><span style="background:#0078d7;color:#fff;line-height:13px;border-right:1px solid #e07a2b;font-size:12.1px">ITAMAR MENDES DA SILVEIRA</span></rm-field>
      <rm-field label="E-Mail:" w="247" h="20" style="margin-bottom:4px"></rm-field>
      <div style="display:flex;align-items:flex-end;gap:5px"><rm-field bold label="Código de Acesso:" w="222" h="20"><a href="#" style="color:#0000ee;font-size:10.5px;padding-left:1px">Departamento Pessoal</a></rm-field><span style="width:19px;height:19px;border:1px solid #d4d4d4;border-radius:3px;background:#f5f5f5;box-sizing:border-box;text-align:center;line-height:17px;font-size:11px">...</span></div>
    </div>
    <div slot="right">
      <rm-field label="Nome Social:" w="247" h="20" style="margin-top:37px"></rm-field>
      <div style="margin:50px 0 0 -2px;width:82px;height:31px;border:1px solid #d8d8d8;box-sizing:border-box;display:flex;align-items:center;padding-left:6px"><rm-check checked>Ativo</rm-check></div>
    </div>
  </rm-form></rm-tabs>
  <rm-btn slot="actions">OK</rm-btn>
  <rm-btn slot="actions">Cancelar</rm-btn>
  <rm-btn slot="actions" style="margin-left:3px;width:70px;border-color:#efefef;box-shadow:none;padding-right:4px">Salvar</rm-btn>
</rm-dialog>
<rm-mark style="left:15px;top:317px;width:319px;height:28px"></rm-mark>
<rm-mark style="left:657px;top:377px;width:168px;height:56px"></rm-mark>
<rm-mark style="left:971px;top:581px;width:78px;height:29px"></rm-mark>
</rm-app>
</body>
</html>
